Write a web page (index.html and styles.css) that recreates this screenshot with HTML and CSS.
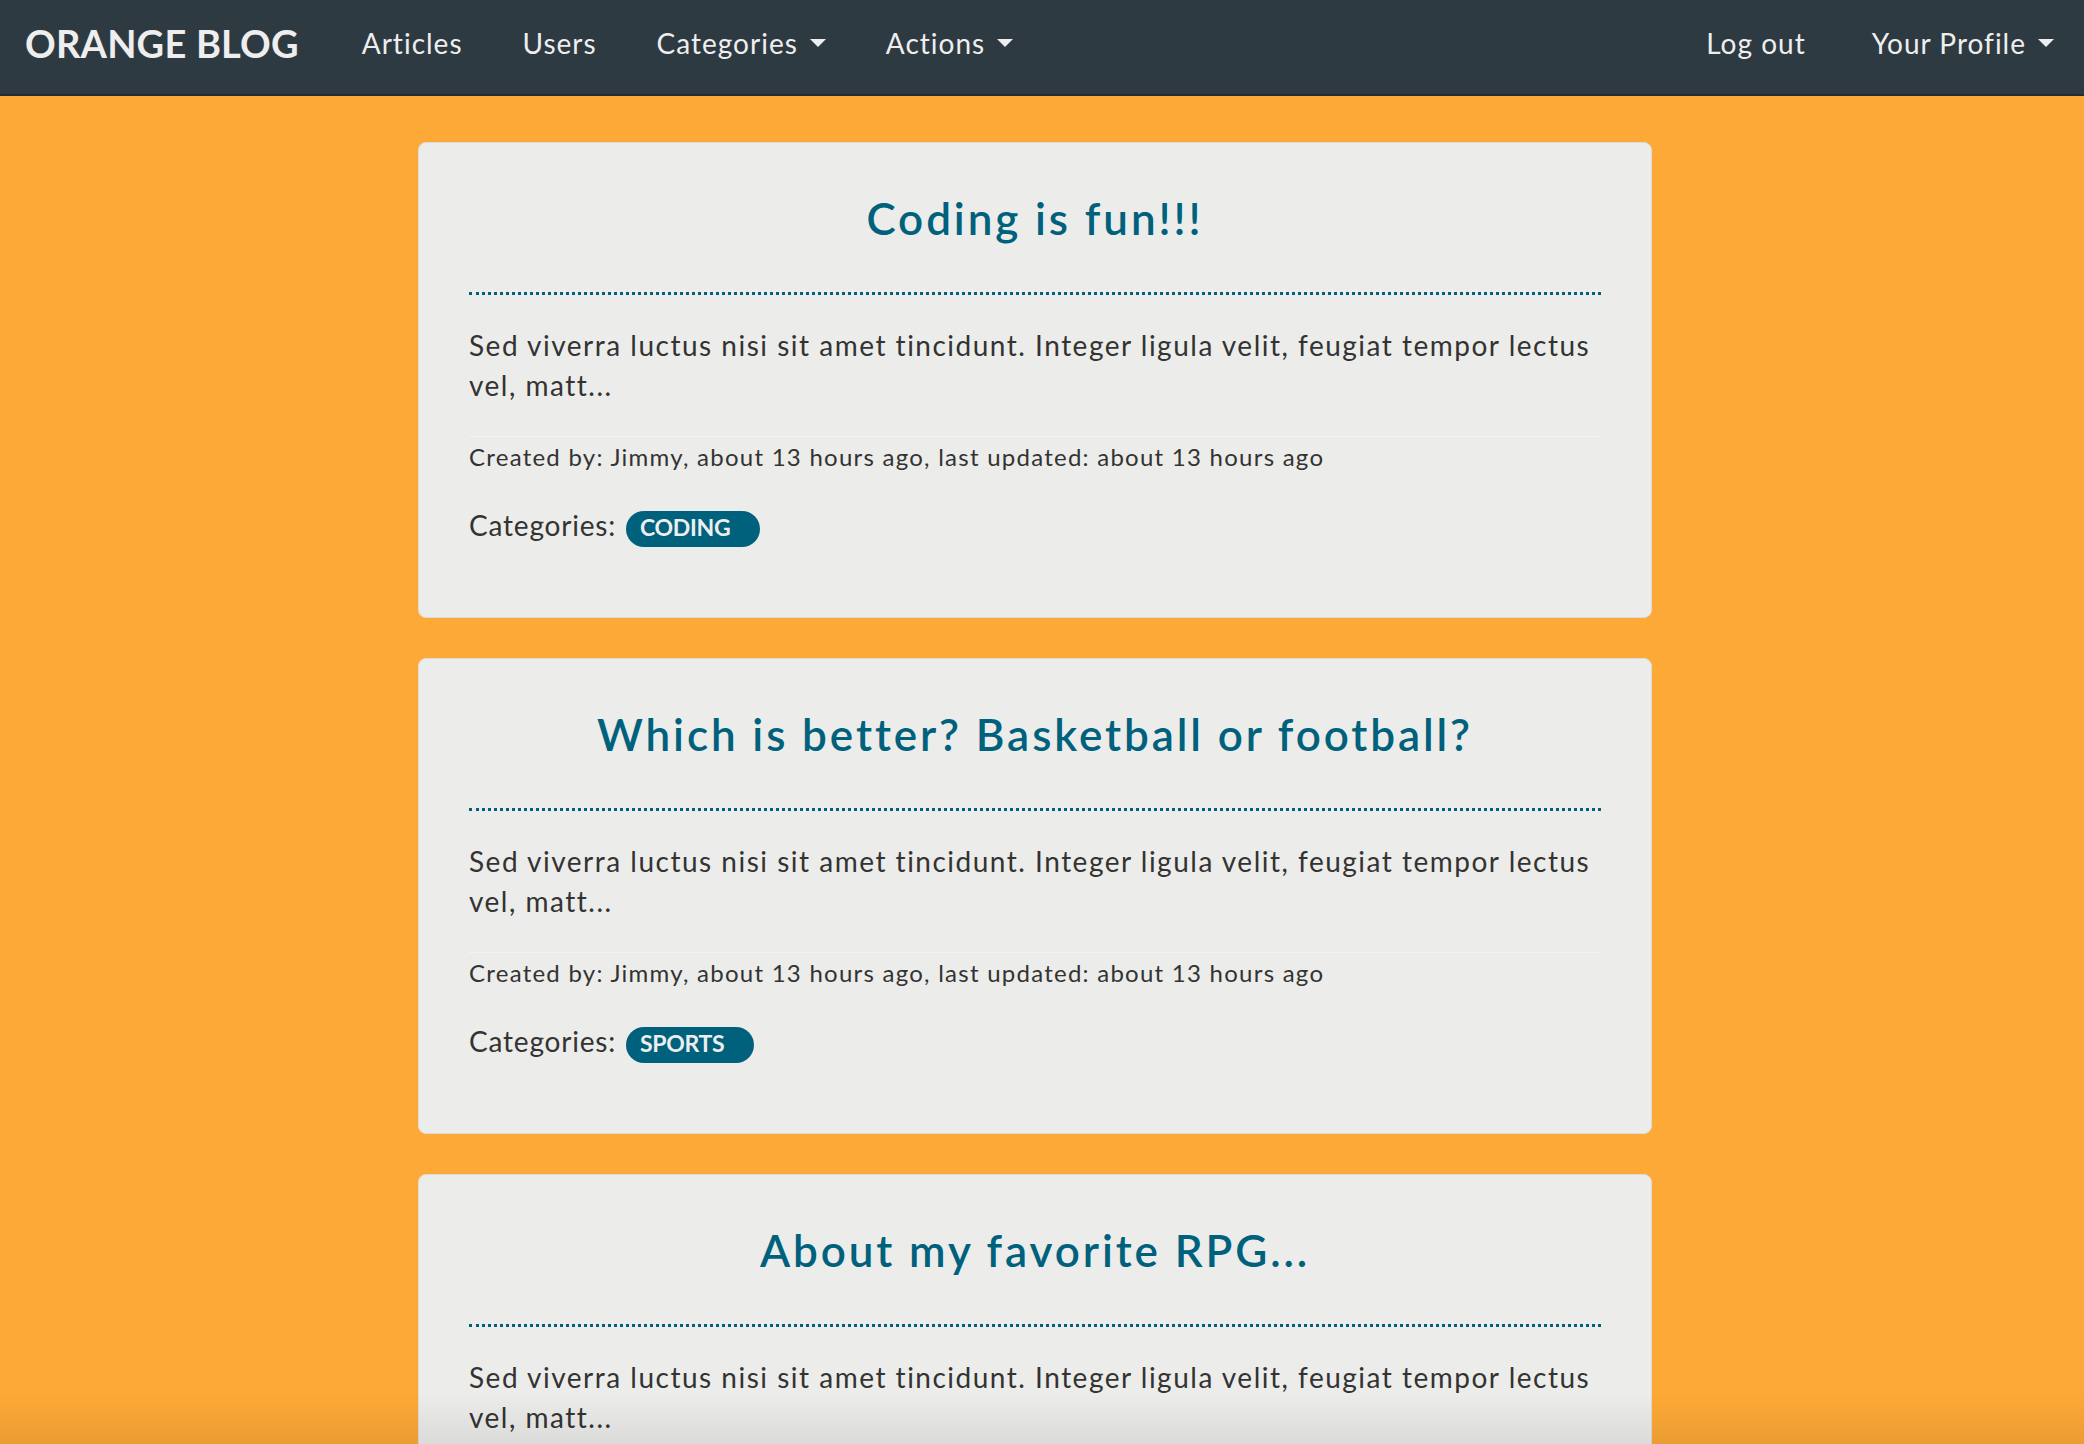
FILE: index.html
```html
<!DOCTYPE html>
<html lang="en">
<head>
<meta charset="utf-8">
<title>Orange Blog</title>
<link rel="stylesheet" href="styles.css">
</head>
<body>
<nav class="navbar">
  <div class="nav-left">
    <a class="brand" href="#">ORANGE BLOG</a>
    <a class="nav-link" href="#">Articles</a>
    <a class="nav-link" href="#">Users</a>
    <a class="nav-link" href="#">Categories <span class="caret"></span></a>
    <a class="nav-link" href="#">Actions <span class="caret"></span></a>
  </div>
  <div class="nav-right">
    <a class="nav-link" href="#">Log out</a>
    <a class="nav-link" href="#">Your Profile <span class="caret"></span></a>
  </div>
</nav>

<main class="feed">
  <article class="card">
    <h2 class="card-title">Coding is fun!!!</h2>
    <p class="card-text">Sed viverra luctus nisi sit amet tincidunt. Integer ligula velit, feugiat tempor lectus vel, matt...</p>
    <div class="meta">Created by: Jimmy, about 13 hours ago, last updated: about 13 hours ago</div>
    <div class="cats">Categories: <span class="badge">CODING</span></div>
  </article>

  <article class="card">
    <h2 class="card-title">Which is better? Basketball or football?</h2>
    <p class="card-text">Sed viverra luctus nisi sit amet tincidunt. Integer ligula velit, feugiat tempor lectus vel, matt...</p>
    <div class="meta">Created by: Jimmy, about 13 hours ago, last updated: about 13 hours ago</div>
    <div class="cats">Categories: <span class="badge">SPORTS</span></div>
  </article>

  <article class="card">
    <h2 class="card-title">About my favorite RPG...</h2>
    <p class="card-text">Sed viverra luctus nisi sit amet tincidunt. Integer ligula velit, feugiat tempor lectus vel, matt...</p>
    <div class="meta">Created by: Jimmy, about 13 hours ago, last updated: about 13 hours ago</div>
    <div class="cats">Categories: <span class="badge">GAMES</span></div>
  </article>
</main>
<div class="bottom-shade"></div>
</body>
</html>
```

FILE: styles.css
```css
* { box-sizing: border-box; }

html, body {
  margin: 0;
  padding: 0;
}

body {
  background: #fda937;
  font-family: Lato, "Open Sans", sans-serif;
  color: #333;
  font-size: 28px;
  line-height: 40px;
}

a { text-decoration: none; }

.navbar {
  height: 96px;
  padding-bottom: 8px;
  background: #2e3a42;
  border-bottom: 2px solid #232c32;
  display: flex;
  justify-content: space-between;
  align-items: center;
}

.nav-left, .nav-right {
  display: flex;
  align-items: center;
}

.brand {
  color: #eeeeee;
  font-size: 38px;
  font-weight: 700;
  letter-spacing: 0.2px;
  padding: 0 33px 0 25px;
}

.nav-link {
  color: #eeeeee;
  font-size: 28px;
  letter-spacing: 1px;
  padding: 0 30px;
  display: flex;
  align-items: center;
}

.nav-right .nav-link:first-child {
  padding-right: 36px;
}

.caret {
  display: inline-block;
  width: 0;
  height: 0;
  margin-left: 12px;
  border-left: 8px solid transparent;
  border-right: 8px solid transparent;
  border-top: 8px solid #eeeeee;
}

.feed {
  width: 1234px;
  margin: 46px 0 0 418px;
  display: flex;
  flex-direction: column;
  gap: 40px;
}

.card {
  background: #ececea;
  border: 1px solid #dedcd8;
  border-radius: 8px;
  padding: 51px 50px 70px;
}

.card-title {
  margin: 0;
  color: #00617d;
  font-size: 44px;
  line-height: 48px;
  font-weight: 600;
  letter-spacing: 2.9px;
  text-align: center;
  padding-bottom: 50px;
  border-bottom: 3px dotted #00617d;
}

.card-text {
  margin: 30px 0 0;
  font-size: 28px;
  line-height: 40px;
  letter-spacing: 1.5px;
}

.meta {
  margin-top: 31px;
  border-top: 1px solid #f3f3f1;
  padding-top: 3px;
  font-size: 24px;
  line-height: 34px;
  letter-spacing: 1.25px;
}

.cats {
  margin-top: 31px;
  font-size: 28px;
  line-height: 40px;
  letter-spacing: 0.8px;
}

.badge {
  display: inline-block;
  margin-left: 2px;
  background: #00617d;
  color: #eeeeee;
  font-size: 23px;
  font-weight: 700;
  letter-spacing: -0.3px;
  line-height: 32px;
  padding: 0 30px 4px 14px;
  border-radius: 18px;
}

.bottom-shade {
  position: fixed;
  left: 0;
  right: 0;
  bottom: 0;
  height: 50px;
  pointer-events: none;
  background: linear-gradient(to bottom, rgba(0,0,0,0), rgba(0,0,0,0.07));
}
```
